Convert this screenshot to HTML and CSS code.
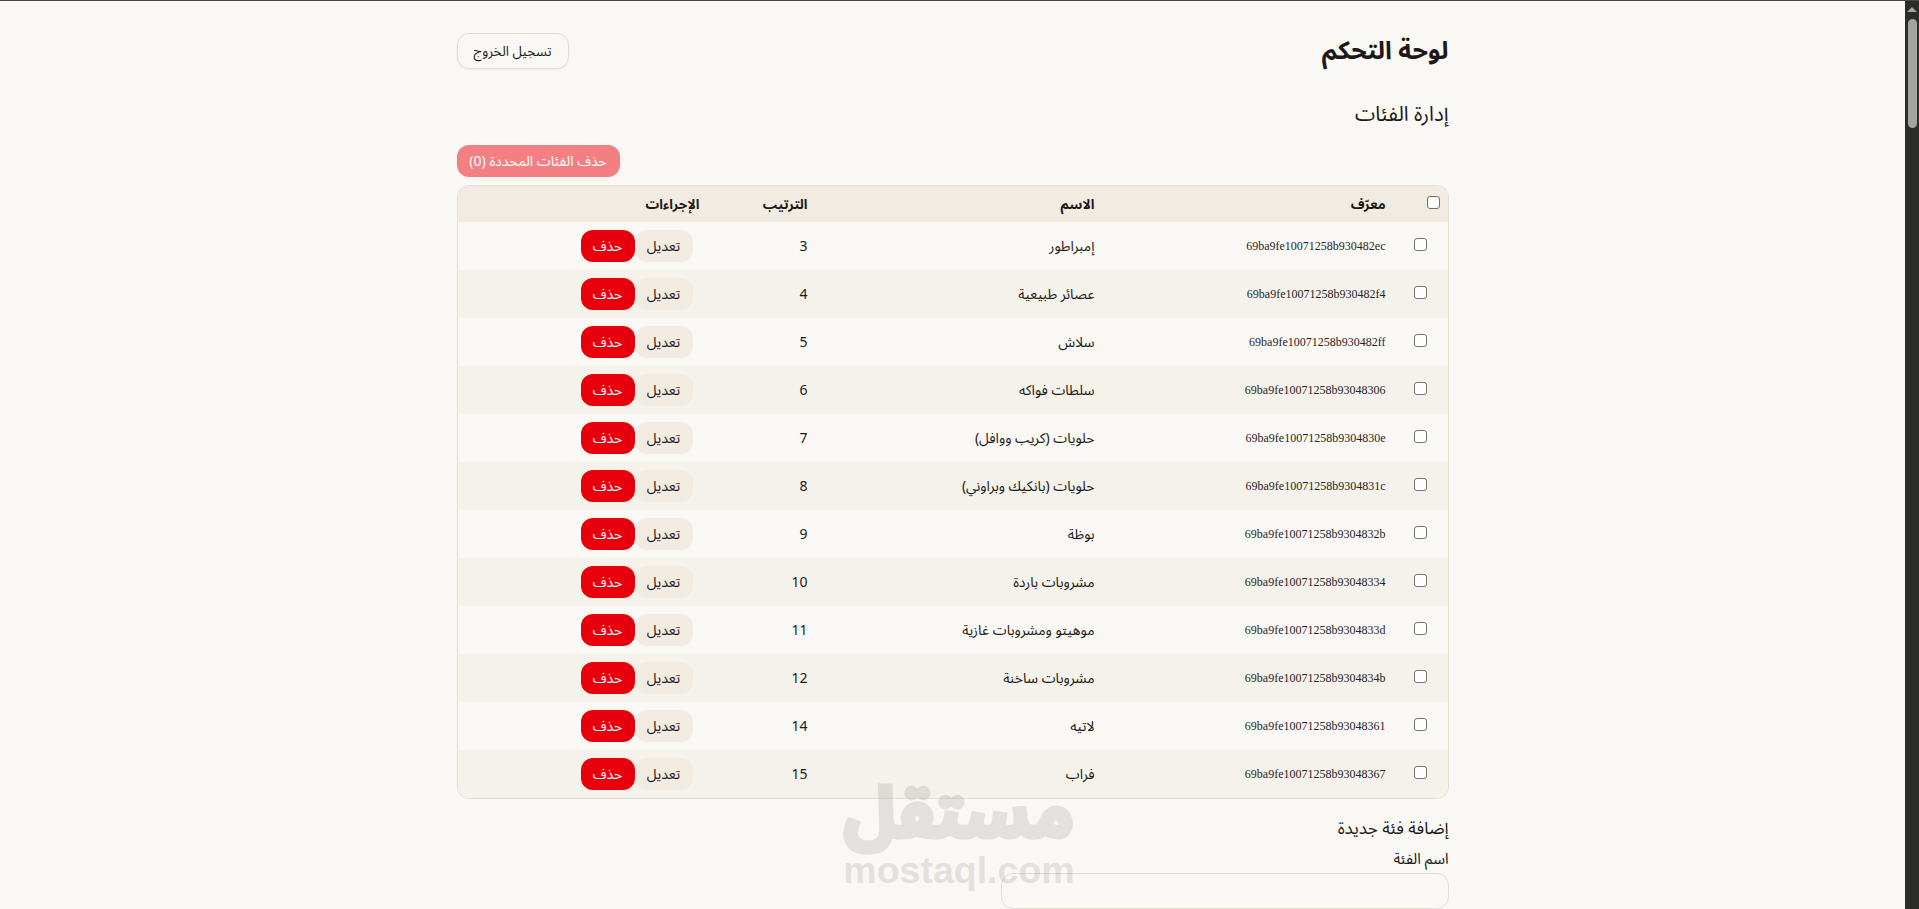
FILE: index.html
```html
<!DOCTYPE html>
<html lang="ar" dir="rtl">
<head>
<meta charset="utf-8">
<title>لوحة التحكم</title>
<link rel="stylesheet" href="styles.css">
</head>
<body>
<div class="frame">
<main class="page">
<div class="wrap">
<header class="top">
<h1 class="title">لوحة التحكم</h1>
<button class="logout">تسجيل الخروج</button>
</header>
<h2 class="section">إدارة الفئات</h2>
<button class="bulk" disabled>حذف الفئات المحددة (0)</button>
<div class="table-box">
<table class="grid">
<thead>
<tr><th class="c-check"><input type="checkbox" class="box"></th><th class="c-id">معرّف</th><th class="c-name">الاسم</th><th class="c-order">الترتيب</th><th class="c-act">الإجراءات</th></tr>
</thead>
<tbody>
<tr><td class="c-check"><input type="checkbox" class="box"></td><td class="mono">69ba9fe10071258b930482ec</td><td>إمبراطور</td><td>3</td><td><div class="acts"><button class="edit">تعديل</button><button class="del">حذف</button></div></td></tr>
<tr><td class="c-check"><input type="checkbox" class="box"></td><td class="mono">69ba9fe10071258b930482f4</td><td>عصائر طبيعية</td><td>4</td><td><div class="acts"><button class="edit">تعديل</button><button class="del">حذف</button></div></td></tr>
<tr><td class="c-check"><input type="checkbox" class="box"></td><td class="mono">69ba9fe10071258b930482ff</td><td>سلاش</td><td>5</td><td><div class="acts"><button class="edit">تعديل</button><button class="del">حذف</button></div></td></tr>
<tr><td class="c-check"><input type="checkbox" class="box"></td><td class="mono">69ba9fe10071258b93048306</td><td>سلطات فواكه</td><td>6</td><td><div class="acts"><button class="edit">تعديل</button><button class="del">حذف</button></div></td></tr>
<tr><td class="c-check"><input type="checkbox" class="box"></td><td class="mono">69ba9fe10071258b9304830e</td><td>حلويات (كريب ووافل)</td><td>7</td><td><div class="acts"><button class="edit">تعديل</button><button class="del">حذف</button></div></td></tr>
<tr><td class="c-check"><input type="checkbox" class="box"></td><td class="mono">69ba9fe10071258b9304831c</td><td>حلويات (بانكيك وبراوني)</td><td>8</td><td><div class="acts"><button class="edit">تعديل</button><button class="del">حذف</button></div></td></tr>
<tr><td class="c-check"><input type="checkbox" class="box"></td><td class="mono">69ba9fe10071258b9304832b</td><td>بوظة</td><td>9</td><td><div class="acts"><button class="edit">تعديل</button><button class="del">حذف</button></div></td></tr>
<tr><td class="c-check"><input type="checkbox" class="box"></td><td class="mono">69ba9fe10071258b93048334</td><td>مشروبات باردة</td><td>10</td><td><div class="acts"><button class="edit">تعديل</button><button class="del">حذف</button></div></td></tr>
<tr><td class="c-check"><input type="checkbox" class="box"></td><td class="mono">69ba9fe10071258b9304833d</td><td>موهيتو ومشروبات غازية</td><td>11</td><td><div class="acts"><button class="edit">تعديل</button><button class="del">حذف</button></div></td></tr>
<tr><td class="c-check"><input type="checkbox" class="box"></td><td class="mono">69ba9fe10071258b9304834b</td><td>مشروبات ساخنة</td><td>12</td><td><div class="acts"><button class="edit">تعديل</button><button class="del">حذف</button></div></td></tr>
<tr><td class="c-check"><input type="checkbox" class="box"></td><td class="mono">69ba9fe10071258b93048361</td><td>لاتيه</td><td>14</td><td><div class="acts"><button class="edit">تعديل</button><button class="del">حذف</button></div></td></tr>
<tr><td class="c-check"><input type="checkbox" class="box"></td><td class="mono">69ba9fe10071258b93048367</td><td>فراب</td><td>15</td><td><div class="acts"><button class="edit">تعديل</button><button class="del">حذف</button></div></td></tr>
</tbody>
</table>
</div>
<h3 class="sub">إضافة فئة جديدة</h3>
<label class="lab">اسم الفئة</label>
<input type="text" class="field">
</div>
</main>
<aside class="bar"><span class="arrow"></span><span class="thumb"></span></aside>
</div>
<div class="mark"><div class="mark-ar">مستقل</div><div class="mark-en">mostaql.com</div></div>
</body>
</html>
```
FILE: styles.css
```css
* { box-sizing: border-box; }
html, body { margin: 0; height: 909px; overflow: hidden; }
body { background: #faf8f5; color: #1c1917; font-family: "Noto Sans Arabic", "Noto Sans", "DejaVu Sans", sans-serif; font-size: 14px; border-top: 1px solid #444b44; }
.frame { display: flex; height: 908px; direction: ltr; }
.page { flex: 1; min-width: 0; overflow: hidden; direction: rtl; }
.wrap { width: 1024px; margin: 0 auto; padding: 32px 16px 0; }
.top { display: flex; justify-content: space-between; align-items: center; height: 36px; }
.title { margin: 0; font-size: 25px; font-weight: 700; line-height: 36px; }
.logout { width: 112px; height: 36px; border: 1px solid #e5ddd2; border-radius: 12px; background: #faf8f5; font: inherit; font-size: 13.5px; color: #1c1917; box-shadow: 0 1px 2px rgba(0,0,0,.05); }
.section { margin: 32px 0 0; font-size: 20.5px; font-weight: 400; line-height: 28px; }
.bulk { display: block; margin: 16px auto 0 0; width: 163px; height: 32px; border: 0; border-radius: 12px; background: #f47f83; color: #fff; font: inherit; font-size: 14px; }
.table-box { margin-top: 8px; border: 1px solid #e5ddd2; border-radius: 12px; overflow: hidden; }
.grid { width: 100%; border-collapse: collapse; table-layout: fixed; }
.grid th { height: 36px; background: #f1ebe2; font-weight: 700; font-size: 13.5px; text-align: right; padding: 0 12px; }
.grid td { height: 48px; padding: 0 12px; text-align: right; font-size: 14px; }
.grid tbody tr:nth-child(even) { background: #f5f1eb; }
.grid th.c-check { width: 50px; padding: 0 8px; }
.c-id { width: 291px; }
.c-name { width: 287px; }
.c-order { width: 108px; }
.grid td.mono { font-family: "Liberation Serif", serif; font-size: 12px; color: #292524; }
.box { appearance: none; display: block; width: 13px; height: 13px; margin: 0 9px 3px 0; border: 1px solid #77716c; border-radius: 3px; background: #fff; }
th .box { margin: 0 0 3px; }
.acts { display: flex; margin-right: 7px; }
.edit, .del { height: 32px; border: 0; border-radius: 12px; font: inherit; font-size: 14px; }
.edit { width: 58px; background: #f1ebe2; color: #1c1917; }
.del { width: 54px; background: #e7000b; color: #fff; }
.sub { margin: 18px 0 0; font-size: 17px; font-weight: 400; line-height: 24px; }
.lab { display: block; margin-top: 8px; font-size: 15px; line-height: 20px; }
.field { display: block; width: 448px; height: 36px; margin-top: 4px; border: 1px solid #e5ddd2; border-radius: 12px; background: transparent; }
.bar { width: 14px; flex: none; background: #2c2c2a; display: flex; flex-direction: column; align-items: center; padding-top: 6px; }
.arrow { width: 0; height: 0; border-left: 5px solid transparent; border-right: 5px solid transparent; border-bottom: 5px solid #a3a3a0; }
.thumb { width: 9px; height: 109px; margin-top: 7px; border-radius: 5px; background: #a3a3a0; }
.mark { position: absolute; left: 843px; top: 777px; width: 232px; text-align: center; color: #888; opacity: .2; pointer-events: none; }
.mark-ar { font-size: 69px; font-weight: 700; line-height: 76px; direction: rtl; -webkit-text-stroke: 5px #888; }
.mark-en { font-family: "Liberation Sans", sans-serif; font-size: 37.5px; font-weight: 700; line-height: 34px; }
```
